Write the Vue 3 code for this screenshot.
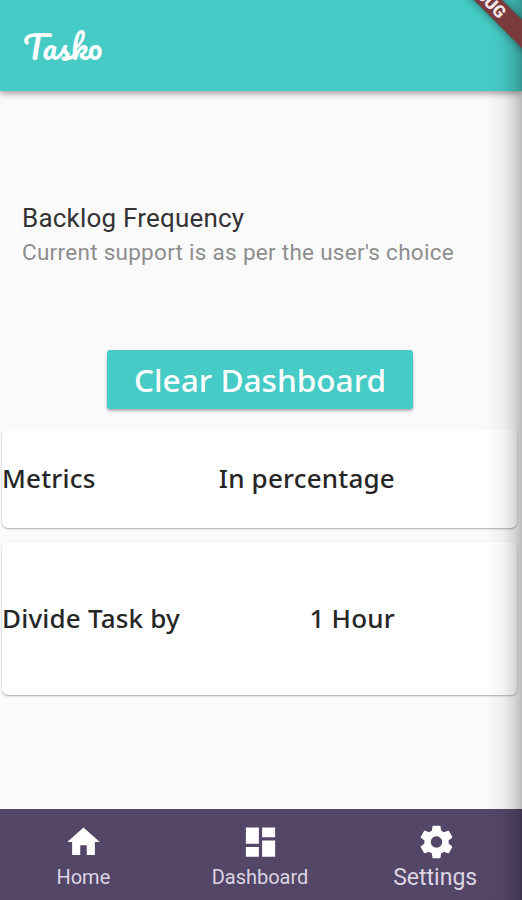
<template>
  <div class="screen">
    <header class="app-bar">
      <h1 class="brand">Tasko</h1>
    </header>

    <main class="content">
      <section class="preference">
        <h2 class="preference-title">Backlog Frequency</h2>
        <p class="preference-subtitle">Current support is as per the user's choice</p>
      </section>

      <button class="clear-btn" type="button">Clear Dashboard</button>

      <div
        v-for="item in settings"
        :key="item.label"
        class="card"
        :class="{ tall: item.tall }"
      >
        <span class="card-label">{{ item.label }}</span>
        <span class="card-value">{{ item.value }}</span>
      </div>
    </main>

    <nav class="bottom-nav">
      <button
        v-for="tab in tabs"
        :key="tab.name"
        type="button"
        class="nav-item"
        :class="{ active: tab.name === activeTab }"
        @click="activeTab = tab.name"
      >
        <svg class="nav-icon" viewBox="0 0 24 24" aria-hidden="true">
          <path :d="tab.icon" />
        </svg>
        <span class="nav-label">{{ tab.name }}</span>
      </button>
    </nav>

    <div class="edge-shadow"></div>
    <div class="banner"><span>DEBUG</span></div>
  </div>
</template>

<script setup>
import { ref } from 'vue'

const activeTab = ref('Settings')

const settings = [
  { label: 'Metrics', value: 'In percentage', tall: false },
  { label: 'Divide Task by', value: '1 Hour', tall: true }
]

const tabs = [
  { name: 'Home', icon: 'M10 20v-6h4v6h5v-8h3L12 3 2 12h3v8z' },
  { name: 'Dashboard', icon: 'M3 13h8V3H3v10zm0 8h8v-6H3v6zm10 0h8V11h-8v10zm0-18v6h8V3h-8z' },
  {
    name: 'Settings',
    icon: 'M19.43 12.98c.04-.32.07-.64.07-.98s-.03-.66-.07-.98l2.11-1.65c.19-.15.24-.42.12-.64l-2-3.46c-.12-.22-.39-.3-.61-.22l-2.49 1c-.52-.4-1.08-.73-1.69-.98l-.38-2.65C14.46 2.18 14.25 2 14 2h-4c-.25 0-.46.18-.49.42l-.38 2.65c-.61.25-1.17.59-1.69.98l-2.49-1c-.23-.09-.49 0-.61.22l-2 3.46c-.13.22-.07.49.12.64l2.11 1.65c-.04.32-.07.65-.07.98s.03.66.07.98l-2.11 1.65c-.19.15-.24.42-.12.64l2 3.46c.12.22.39.3.61.22l2.49-1c.52.4 1.08.73 1.69.98l.38 2.65c.03.24.24.42.49.42h4c.25 0 .46-.18.49-.42l.38-2.65c.61-.25 1.17-.59 1.69-.98l2.49 1c.23.09.49 0 .61-.22l2-3.46c.12-.22.07-.49-.12-.64l-2.11-1.65zM12 15.5c-1.93 0-3.5-1.57-3.5-3.5s1.57-3.5 3.5-3.5 3.5 1.57 3.5 3.5-1.57 3.5-3.5 3.5z'
  }
]
</script>

<style>
body {
  margin: 0;
  background: #fafafa;
}
</style>

<style scoped>
.screen {
  position: relative;
  display: flex;
  flex-direction: column;
  width: 522px;
  height: 900px;
  overflow: hidden;
  background: #fafafa;
  font-family: Roboto, sans-serif;
}

.app-bar {
  z-index: 1;
  display: flex;
  align-items: center;
  flex: 0 0 91px;
  padding-left: 23px;
  background: #46cbc6;
  box-shadow: 0 2px 7px rgba(0, 0, 0, 0.42);
}

.brand {
  margin: 1px 0 0;
  color: #fff;
  font-family: Pacifico, cursive;
  font-size: 32px;
  font-weight: 400;
  line-height: 88px;
}

.content {
  display: flex;
  flex: 1;
  flex-direction: column;
}

.preference {
  padding: 110px 22px 0;
}

.preference-title {
  margin: 0;
  color: #333;
  font-size: 26px;
  font-weight: 400;
  line-height: 34px;
  letter-spacing: 0.2px;
}

.preference-subtitle {
  margin: 0;
  color: #8e8e8e;
  font-size: 22.5px;
  line-height: 35px;
  letter-spacing: 0.28px;
  white-space: nowrap;
}

.clear-btn {
  align-self: center;
  width: 306px;
  height: 59px;
  margin: 80px 2px 20px 0;
  padding: 0;
  border: 0;
  border-radius: 3px;
  background: #46cbc6;
  box-shadow: 0 2px 3px rgba(0, 0, 0, 0.3);
  color: #fff;
  font-family: "Noto Sans", sans-serif;
  font-size: 31.6px;
  font-weight: 500;
  line-height: 58px;
  white-space: nowrap;
}

.card {
  display: flex;
  align-items: center;
  justify-content: space-between;
  box-sizing: border-box;
  height: 99px;
  margin: 0 5px 14px 2px;
  padding: 0 122px 2px 0;
  border-radius: 6px;
  background: #fff;
  box-shadow: 0 1px 2px rgba(0, 0, 0, 0.32);
  color: #262626;
  font-family: "Noto Sans", sans-serif;
  font-size: 26px;
  font-weight: 500;
  line-height: 34px;
  letter-spacing: 0.2px;
  white-space: nowrap;
}

.card.tall {
  height: 153px;
}

.bottom-nav {
  display: flex;
  flex: 0 0 91px;
  margin: 0 -3px 0 -5px;
  background: #544667;
}

.nav-item {
  display: flex;
  flex: 1 1 0;
  flex-direction: column;
  align-items: center;
  margin: 0;
  padding: 13px 0 0;
  border: 0;
  background: none;
  color: #ddd5e2;
  font-family: inherit;
}

.nav-icon {
  width: 39px;
  height: 40px;
  fill: #fff;
}

.nav-label {
  font-size: 20px;
  line-height: 30px;
}

.nav-item.active .nav-label {
  margin-right: 3px;
  font-size: 23px;
  line-height: 31px;
}

/* fade along the right side of the screen */
.edge-shadow {
  position: absolute;
  z-index: 2;
  top: 0;
  right: 0;
  width: 36px;
  height: 900px;
  background: linear-gradient(to right, transparent, rgba(0, 0, 0, 0.04) 45%, rgba(0, 0, 0, 0.13) 75%, rgba(0, 0, 0, 0.25));
  pointer-events: none;
}

.banner {
  position: absolute;
  z-index: 3;
  top: -14px;
  left: 404px;
  display: flex;
  align-items: center;
  justify-content: center;
  width: 160px;
  height: 20px;
  background: #793b3c;
  box-shadow: 0 0 9px rgba(0, 0, 0, 0.45);
  color: #f3e9e9;
  font-size: 17px;
  font-weight: 900;
  line-height: 20px;
  transform: rotate(45deg);
}
</style>
